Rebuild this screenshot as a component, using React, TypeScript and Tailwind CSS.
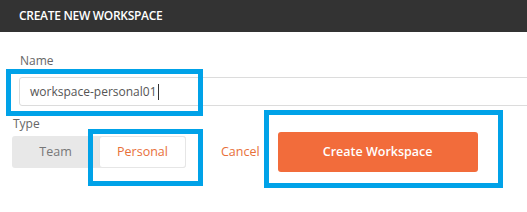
import React from "react";

const FONT = { fontFamily: '"Open Sans", "Liberation Sans", sans-serif' };

/** Blue annotation rectangle drawn over the form */
function Highlight({ className }: { className: string }) {
  return (
    <div
      className={"absolute border-[5px] border-[#00a2e8] pointer-events-none " + className}
    />
  );
}

export default function App() {
  return (
    <div className="relative w-[527px] h-[212px] bg-white overflow-hidden" style={FONT}>
      {/* Header */}
      <div className="h-[32px] bg-[#333333] flex items-center pl-[19px]">
        <span className="text-white text-[12px] font-semibold tracking-[-0.3px]">
          CREATE NEW WORKSPACE
        </span>
      </div>

      {/* Name field */}
      <div className="pl-[20px] pt-[22px] text-[12px] leading-[14px] text-[#666]">Name</div>
      <div className="pl-[19px] mt-[9px]">
        <div className="h-[29px] -mr-2 border border-[#dcdcdc] rounded-l-[3px] flex items-center pl-[10px]">
          <span className="text-[12px] text-[#555]">workspace-personal01</span>
          <span className="w-px h-[16px] bg-[#333] ml-[1px]" />
        </div>
      </div>

      {/* Type */}
      <div className="pl-[13px] mt-[12px] text-[12px] leading-[12px] text-[#666]">Type</div>
      <div className="flex items-center pl-[12px] mt-[2px]">
        <div className="flex h-[32px] bg-[#e8e8e8] rounded-[3px]">
          <div className="w-[87px] flex items-center justify-center text-[12.5px] text-[#777]">
            Team
          </div>
          <div className="w-[87px] flex items-center justify-center bg-white border border-[#e6e6e6] rounded-[3px] text-[12.5px] text-[#e8703a]">
            Personal
          </div>
        </div>
        <button className="ml-[35px] text-[12.5px] text-[#e8703a]">Cancel</button>
        <button className="ml-[18px] w-[200px] h-[40px] rounded-[3px] bg-[#f26c3b] text-white text-[12.5px] font-semibold">
          Create Workspace
        </button>
      </div>

      {/* Annotation boxes */}
      <Highlight className="left-[6px] top-[69px] w-[197px] h-[47px]" />
      <Highlight className="left-[88px] top-[129px] w-[115px] h-[57px]" />
      <Highlight className="left-[264px] top-[110px] w-[239px] h-[78px]" />
    </div>
  );
}
